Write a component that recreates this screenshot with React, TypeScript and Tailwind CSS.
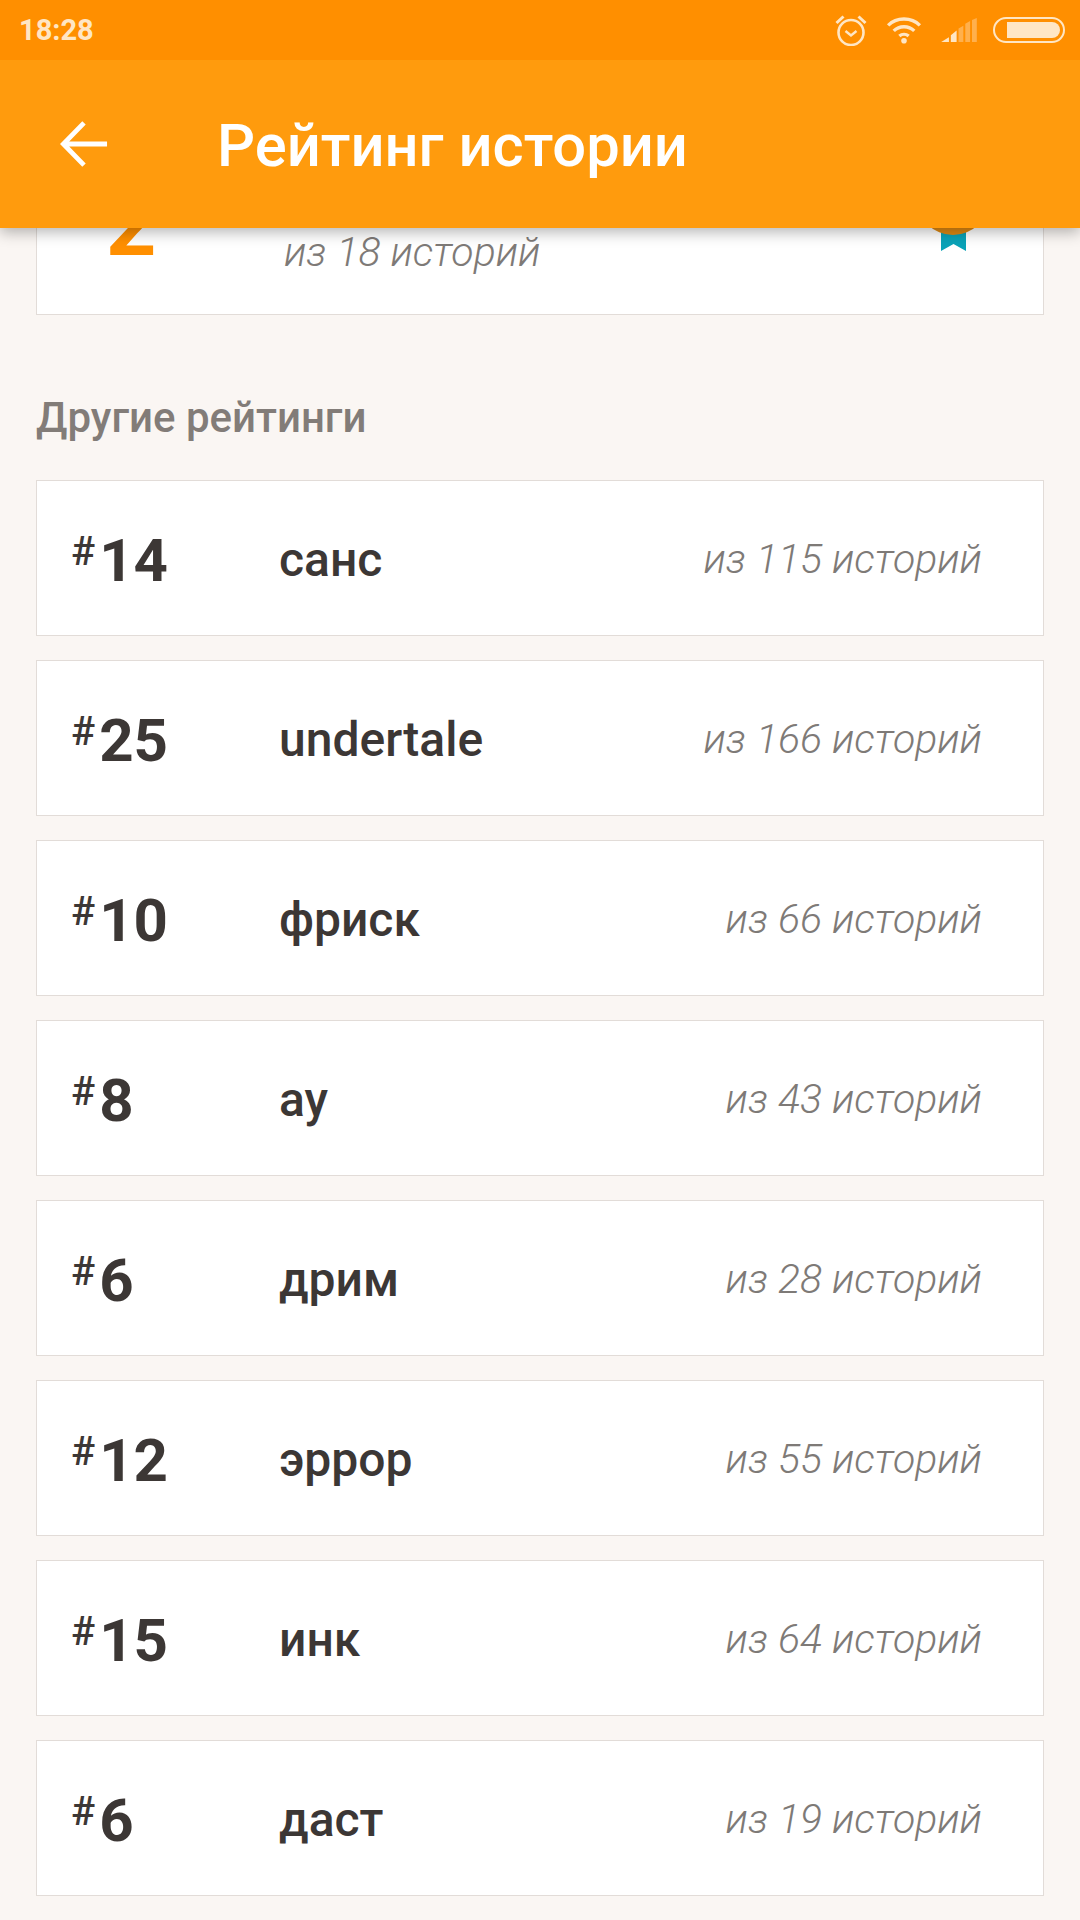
const rows = [
  { rank: 14, tag: 'санс', total: 115 },
  { rank: 25, tag: 'undertale', total: 166 },
  { rank: 10, tag: 'фриск', total: 66 },
  { rank: 8, tag: 'ау', total: 43 },
  { rank: 6, tag: 'дрим', total: 28 },
  { rank: 12, tag: 'эррор', total: 55 },
  { rank: 15, tag: 'инк', total: 64 },
  { rank: 6, tag: 'даст', total: 19 },
];

function StatusIcons() {
  return (
    <div className="flex items-center">
      {/* alarm */}
      <svg width="32" height="32" viewBox="0 0 32 32" fill="none" stroke="#ffe6c4" strokeWidth="2.6" className="mr-[18px]">
        <circle cx="16" cy="18.500" r="12.500" />
        <path d="M10.500 17l5.500 4.500 5.500-4.500" strokeWidth="2.4" />
        <path d="M1.500 9l7-6.500M30.500 9l-7-6.500" strokeWidth="3" />
      </svg>
      {/* wifi */}
      <svg width="38" height="28" viewBox="0 0 38 30" fill="none" stroke="#ffe6c4" strokeWidth="3.6" className="mr-[18px]">
        <path d="M2 10C11 1 27 1 36 10" />
        <path d="M8 16c6-6 16-6 22 0" />
        <path d="M14 21.500c3-2.500 7-2.500 10 0" />
        <circle cx="19" cy="26.500" r="3" fill="#ffe6c4" stroke="none" />
      </svg>
      {/* signal */}
      <svg width="37" height="25" viewBox="0 0 38 26" className="mr-[15px]">
        <path d="M0 25l8-5v5z" fill="#ffe6c4" />
        <path d="M10 18l6-5v12h-6z" fill="#ffe6c4" />
        <path d="M18 11l5-3v17h-5zM25 6l5-3v22h-5zM32 2l5-2v25h-5z" fill="#ffb04d" />
      </svg>
      {/* battery */}
      <div className="w-[72px] h-[26px] rounded-full border-2 border-[#ffe6c4] p-[3px] flex justify-end">
        <div className="w-[53px] h-full rounded-r-full bg-[#ffe6c4]" />
      </div>
    </div>
  );
}

function Medal() {
  return (
    <svg width="72" height="90" viewBox="0 0 72 90">
      <path d="M24 50h25v40l-12.500-7L24 90z" fill="#0aa3b8" />
      <circle cx="36" cy="38" r="36" fill="#e08a12" />
    </svg>
  );
}

export default function App() {
  return (
    <div className="relative w-[1080px] h-[1920px] overflow-hidden bg-[#faf6f3] font-['Roboto',sans-serif]">
      <header className="absolute inset-x-0 top-0 z-10 shadow-[0_4px_14px_rgba(0,0,0,0.3)]">
        <div className="h-[60px] bg-[#ff8f00] flex items-center justify-between pl-[19px] pr-[15px]">
          <span className="text-[29px] font-bold text-[#ffe6c4] mt-[2px]">18:28</span>
          <StatusIcons />
        </div>
        <div className="h-[168px] bg-[#ff9b0d] flex items-center pl-[60px]">
          <svg width="48" height="50" viewBox="0 0 50 50" fill="none" stroke="white" strokeWidth="5">
            <path d="M49 25H4M25 3L3.500 25 25 47" />
          </svg>
          <h1 className="ml-[109px] mt-[5px] text-[59.700px] font-medium text-white">Рейтинг истории</h1>
        </div>
      </header>

      <main className="pl-[36px] pr-[36px] pt-[159px]">
        <section className="h-[156px] bg-white border border-[#e2dcd8] flex items-end">
          <span className="w-[249px] pl-[69px] mb-[45px] text-[88px] leading-none font-bold text-[#ff8f00]">2</span>
          <span className="ml-[-2px] mb-[41px] text-[41px] leading-none font-light italic text-[#7e7a77]">из 18 историй</span>
          <div className="ml-auto mr-[54px] mb-[63px]">
            <Medal />
          </div>
        </section>

        <h2 className="mt-[79px] mb-[38px] text-[42px] leading-[48px] font-medium text-[#827c78]">Другие рейтинги</h2>

        <div className="flex flex-col gap-[24px]">
          {rows.map((row) => (
            <div key={row.tag} className="h-[156px] bg-white border border-[#e2dcd8] flex items-center pt-[5px] pl-[34px] pr-[61px]">
              <div className="w-[208px] flex items-start text-[#3c3735]">
                <span className="text-[40px] leading-none font-medium mt-[1px] mr-[4px]">#</span>
                <span className="text-[60px] leading-none font-bold">{row.rank}</span>
              </div>
              <span className="mt-[-2px] text-[48px] font-medium text-[#3c3735]">{row.tag}</span>
              <span className="ml-auto mt-[-1px] text-[41px] font-light italic text-[#7e7a77]">из {row.total} историй</span>
            </div>
          ))}
        </div>
      </main>
    </div>
  );
}
